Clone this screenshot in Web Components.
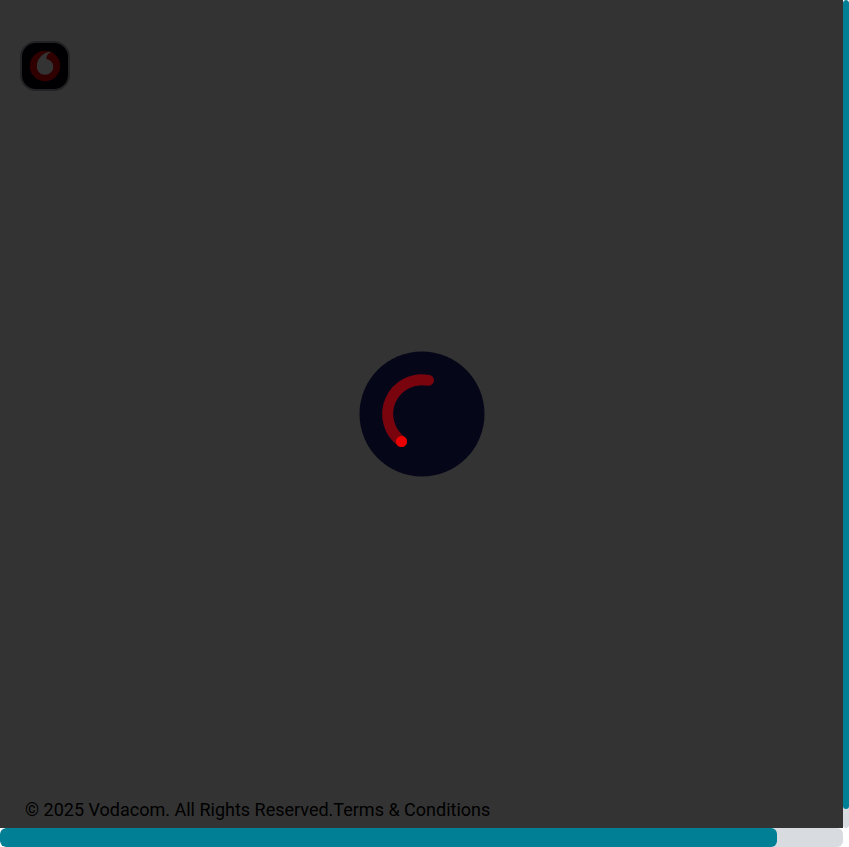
<!DOCTYPE html>
<html lang="en">
<head>
<meta charset="utf-8">
<title>Vodacom</title>
<style>
html, body { margin: 0; height: 100%; overflow: hidden; background: #fff; font-family: Roboto, sans-serif; }
</style>
</head>
<body>
<app-viewport>
  <loading-page>
    <brand-badge slot="header"></brand-badge>
    <busy-spinner></busy-spinner>
    <legal-footer slot="footer">© 2025 Vodacom. All Rights Reserved.</legal-footer>
  </loading-page>
  <scroll-track slot="vertical" direction="vertical"></scroll-track>
  <scroll-track slot="horizontal" direction="horizontal"></scroll-track>
</app-viewport>
<script>
const define = (name, html) => customElements.define(name, class extends HTMLElement {
  constructor() {
    super();
    this.attachShadow({ mode: "open" }).innerHTML = html;
  }
});

define("app-viewport", `
  <style>
    :host { display: grid; grid-template: minmax(0, 1fr) 19px / minmax(0, 1fr) 6px; height: 100vh; }
  </style>
  <slot></slot><slot name="vertical"></slot><slot name="horizontal"></slot>`);

define("loading-page", `
  <style>
    :host { display: grid; grid-template-rows: 1fr auto 1fr; background: #333; color: #000; }
    header { padding: 41px 20px 0; }
    main { display: flex; justify-content: center; }
    footer { align-self: end; padding: 0 25px 7px; }
  </style>
  <header><slot name="header"></slot></header>
  <main><slot></slot></main>
  <footer><slot name="footer"></slot></footer>`);

define("brand-badge", `
  <style>
    :host { display: block; width: 50px; height: 50px; }
    svg { display: block; width: 100%; height: 100%; }
  </style>
  <svg viewBox="0 0 50 50" role="img" aria-label="Vodacom">
    <rect x="1" y="1" width="48" height="48" rx="15" fill="#000003" stroke="#222224" stroke-width="2"/>
    <circle cx="25" cy="25" r="15.2" fill="#300000"/>
    <path d="M31.7 10.8C25 10.4 16.8 16.5 16.8 25.2C16.8 30.7 20.6 33.8 25.2 33.7C30 33.6 33.4 30.2 33.3 25.6C33.2 21.4 30.3 18.8 26.5 17.9C26.3 14.7 28.5 11.9 31.7 10.8Z" fill="#333"/>
  </svg>`);

define("busy-spinner", `
  <style>
    :host { display: block; width: 126px; height: 126px; }
    svg { display: block; width: 100%; height: 100%; }
  </style>
  <svg viewBox="0 0 126 126" role="img" aria-label="Loading">
    <circle cx="63" cy="63" r="62.5" fill="#050719"/>
    <path d="M69.5 29.3A34.3 34.3 0 0 0 42.5 90.5" fill="none" stroke="#7a040e" stroke-width="11" stroke-linecap="round"/>
    <circle cx="42.5" cy="90.5" r="5.5" fill="#ea0000"/>
  </svg>`);

define("legal-footer", `
  <style>
    :host { display: block; font-size: 18px; line-height: 22px; }
    a { color: inherit; text-decoration: none; }
  </style>
  <slot></slot><a href="#terms">Terms &amp; Conditions</a>`);

define("scroll-track", `
  <style>
    :host { display: block; background: #d8dbe0; border-radius: 6px; overflow: hidden; }
    :host([direction="vertical"]) { border-radius: 3px; }
    div { background: #007f95; border-radius: inherit; }
    :host([direction="vertical"]) div { height: 97.7%; }
    :host([direction="horizontal"]) div { width: 92.2%; height: 100%; }
  </style>
  <div></div>`);
</script>
</body>
</html>
